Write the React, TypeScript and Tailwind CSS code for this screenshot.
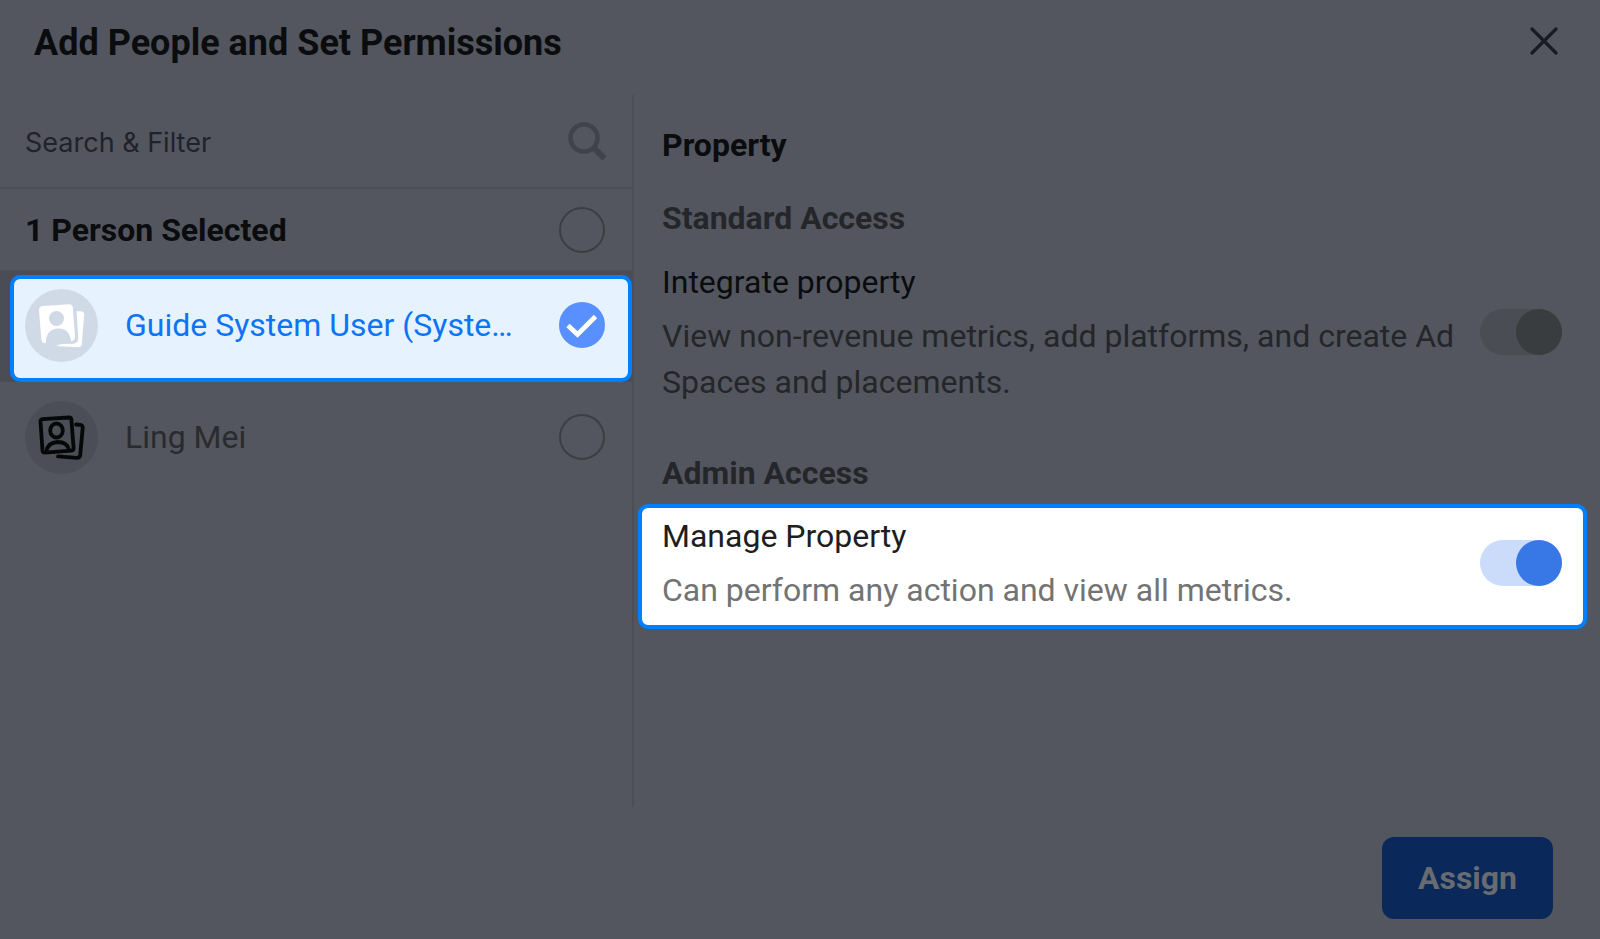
import { useState } from 'react';

interface Person {
  id: string;
  name: string;
}

interface SwitchProps {
  id: string;
  checked: boolean;
  disabled?: boolean;
  onChange?: () => void;
}

interface RoundCheckboxProps {
  id: string;
  checked: boolean;
  onChange: () => void;
}

const people: Person[] = [
  { id: 'guide', name: 'Guide System User (Syste…' },
  { id: 'ling', name: 'Ling Mei' },
];

function AvatarFilled() {
  return (
    <svg className="w-[73px] h-[73px] flex-shrink-0" viewBox="0 0 73 73" aria-hidden="true">
      <circle cx="36.5" cy="36.5" r="36.5" fill="#cfdae6" />
      <path d="M51.500 22.300 L56 22.300 Q59.500 22.800 59.200 26 L56.800 55 Q56.300 58.500 53 58.300 L34 57.200 Q31.500 57 31.500 55 L48.500 54.800 Q53.500 54 53.300 48.500 Z" fill="#fff" />
      <path d="M17.500 17 L44 15.200 Q47.500 15.200 47.800 18.500 L50 47 Q50.200 51.500 46.500 52.300 L20 54 Q16.600 54 16.300 50.500 L14 21 Q13.900 17.400 17.500 17 Z" fill="#fff" />
      <circle cx="31.500" cy="29.500" r="7.500" fill="#cfdae6" />
      <path d="M20.800 54.500 C20.800 43.500 26 40 33 39.500 C40 39 45 43 46.300 52.800 L33 56 Z" fill="#cfdae6" />
    </svg>
  );
}

function AvatarOutline() {
  return (
    <svg className="w-[73px] h-[73px] flex-shrink-0" viewBox="0 0 73 73" aria-hidden="true">
      <circle cx="36.5" cy="36.5" r="36.5" fill="#4b4e56" />
      <g fill="none" stroke="#060708" strokeWidth="3.8" strokeLinecap="round" strokeLinejoin="round">
        <path d="M17.500 18.200 L44 16.500 Q46.200 16.500 46.400 18.700 L48.600 47 Q48.600 49.500 46.300 49.700 L20 51.600 Q17.800 51.600 17.500 49.400 L15.500 20.700 Q15.400 18.500 17.500 18.200 Z" />
        <ellipse cx="31.500" cy="29.500" rx="6.300" ry="7" />
        <path d="M21.500 50.500 Q22.500 41.500 32.500 41 Q42.500 41 44 49" />
        <path d="M51 23.500 L55 23.800 Q58 24.200 57.700 27 L55.200 54 Q54.800 57 52 56.800 L33 55.300" />
      </g>
    </svg>
  );
}

function RoundCheckbox({ id, checked, onChange }: RoundCheckboxProps) {
  return (
    <span className="relative flex w-[46px] h-[46px] flex-shrink-0">
      <input
        id={id}
        type="checkbox"
        checked={checked}
        onChange={onChange}
        className="appearance-none w-full h-full rounded-full border-2 border-[#3c3e46] checked:border-[#5890ff] checked:bg-[#5890ff] cursor-pointer"
      />
      {checked && (
        <svg className="absolute inset-0 pointer-events-none" viewBox="0 0 46 46" fill="none" stroke="#fff" strokeWidth="4.8" aria-hidden="true">
          <path d="M9 23.500 L18.500 32.500 L36.500 14.500" />
        </svg>
      )}
    </span>
  );
}

function Switch({ id, checked, disabled, onChange }: SwitchProps) {
  return (
    <input
      id={id}
      type="checkbox"
      role="switch"
      checked={checked}
      disabled={disabled}
      onChange={onChange}
      className={`appearance-none flex w-[82px] h-[46px] flex-shrink-0 rounded-full checked:justify-end before:block before:w-[46px] before:h-[46px] before:rounded-full ${
        disabled ? 'bg-[#4a4d54] before:bg-[#393d3f]' : 'bg-[#cbdcfb] before:bg-[#3778e6] cursor-pointer'
      }`}
    />
  );
}

export default function App() {
  const [selected, setSelected] = useState<string[]>(['guide']);
  const [query, setQuery] = useState('');
  const [manage, setManage] = useState(true);

  const togglePerson = (id: string) => {
    setSelected(selected.includes(id) ? selected.filter((p) => p !== id) : [...selected, id]);
  };

  return (
    <div className="min-h-screen flex flex-col bg-[#53565e] font-['Roboto',sans-serif] text-[32px] leading-[46px] text-[#0b0c0e]">
      {/* Header */}
      <header className="flex items-start justify-between h-[95px] pt-5 pl-[34px] pr-10">
        <h1 className="text-[36px] font-bold">Add People and Set Permissions</h1>
        <button type="button" aria-label="Close" className="flex items-center justify-center w-8 h-[46px]">
          <svg className="w-8 h-8" viewBox="0 0 32 32" fill="none" stroke="#181b25" strokeWidth="3.2" strokeLinecap="round">
            <path d="M4 2 L28 26 M28 2 L4 26" />
          </svg>
        </button>
      </header>

      <main className="flex flex-1">
        {/* People */}
        <section className="w-[634px] flex-shrink-0 border-r-2 border-[#4b4e56]">
          <div className="flex items-center justify-between h-[94px] pl-[25px] pr-[25px] border-b-2 border-[#4b4e56]">
            <input
              type="text"
              aria-label="Search & Filter"
              placeholder="Search & Filter"
              value={query}
              onChange={(e) => setQuery(e.target.value)}
              className="flex-1 min-w-0 pt-1 bg-transparent font-['Inter',sans-serif] text-[27px] text-[#1f222d] placeholder:text-[#1f222d] focus:outline-none"
            />
            <svg className="w-10 h-10 flex-shrink-0" viewBox="0 0 40 40" fill="none" stroke="#40434b" strokeWidth="4.5" aria-hidden="true">
              <circle cx="17" cy="17" r="13.500" />
              <path d="M26.500 26.500 L37.500 37.500" strokeWidth="6" />
            </svg>
          </div>

          <div className="flex items-center justify-between h-[82px] pl-[25px] pr-[27px] border-b border-[#4b4e56]">
            <label htmlFor="select-all" className="font-bold">{selected.length} Person Selected</label>
            <RoundCheckbox id="select-all" checked={selected.length === people.length} onChange={() => setSelected(people.map((p) => p.id))} />
          </div>

          {people.map((person) => {
            const active = selected.includes(person.id);
            return (
              <div key={person.id} className={active ? 'bg-[#4a4d56] pt-1 pl-[10px]' : 'pl-[10px]'}>
                <div
                  className={`flex items-center border-4 rounded-[10px] pl-[11px] pr-[23px] ${
                    active ? 'h-[107px] pb-[7px] border-[#0080ff] bg-[#e6f3ff] text-[#0c74f5]' : 'h-[110px] border-transparent text-[#2a2b2e]'
                  }`}
                >
                  {active ? <AvatarFilled /> : <AvatarOutline />}
                  <label htmlFor={person.id} className="flex-1 min-w-0 truncate ml-[27px]">{person.name}</label>
                  <RoundCheckbox id={person.id} checked={active} onChange={() => togglePerson(person.id)} />
                </div>
              </div>
            );
          })}
        </section>

        {/* Permissions */}
        <section className="flex-1 min-w-0 pt-[27px] pl-1 pr-[13px]">
          <div className="pl-6 pr-[25px]">
            <h2 className="font-bold">Property</h2>
            <h3 className="font-bold mt-[27px] text-[#24262a]">Standard Access</h3>
            <div className="flex items-center gap-5 mt-[18px]">
              <div className="flex-1 min-w-0">
                <label htmlFor="integrate" className="block">Integrate property</label>
                <p className="mt-2 text-[#24262a]">View non-revenue metrics, add platforms, and create Ad Spaces and placements.</p>
              </div>
              <Switch id="integrate" checked disabled />
            </div>
            <h3 className="font-bold mt-[45px] text-[#24262a]">Admin Access</h3>
          </div>

          <div className="flex items-center gap-5 mt-2 pl-5 pr-[21px] pt-[5px] pb-3 bg-white border-4 border-[#0080ff] rounded-[10px]">
            <div className="flex-1 min-w-0">
              <label htmlFor="manage" className="block text-[#1c1e21]">Manage Property</label>
              <p className="mt-2 text-[#737373]">Can perform any action and view all metrics.</p>
            </div>
            <Switch id="manage" checked={manage} onChange={() => setManage(!manage)} />
          </div>
        </section>
      </main>

      {/* Footer */}
      <footer className="flex justify-end pt-[30px] pr-[47px] pb-5">
        <button type="button" className="h-[82px] px-9 rounded-xl bg-[#0a2859] font-bold text-[#686b70]">
          Assign
        </button>
      </footer>
    </div>
  );
}
